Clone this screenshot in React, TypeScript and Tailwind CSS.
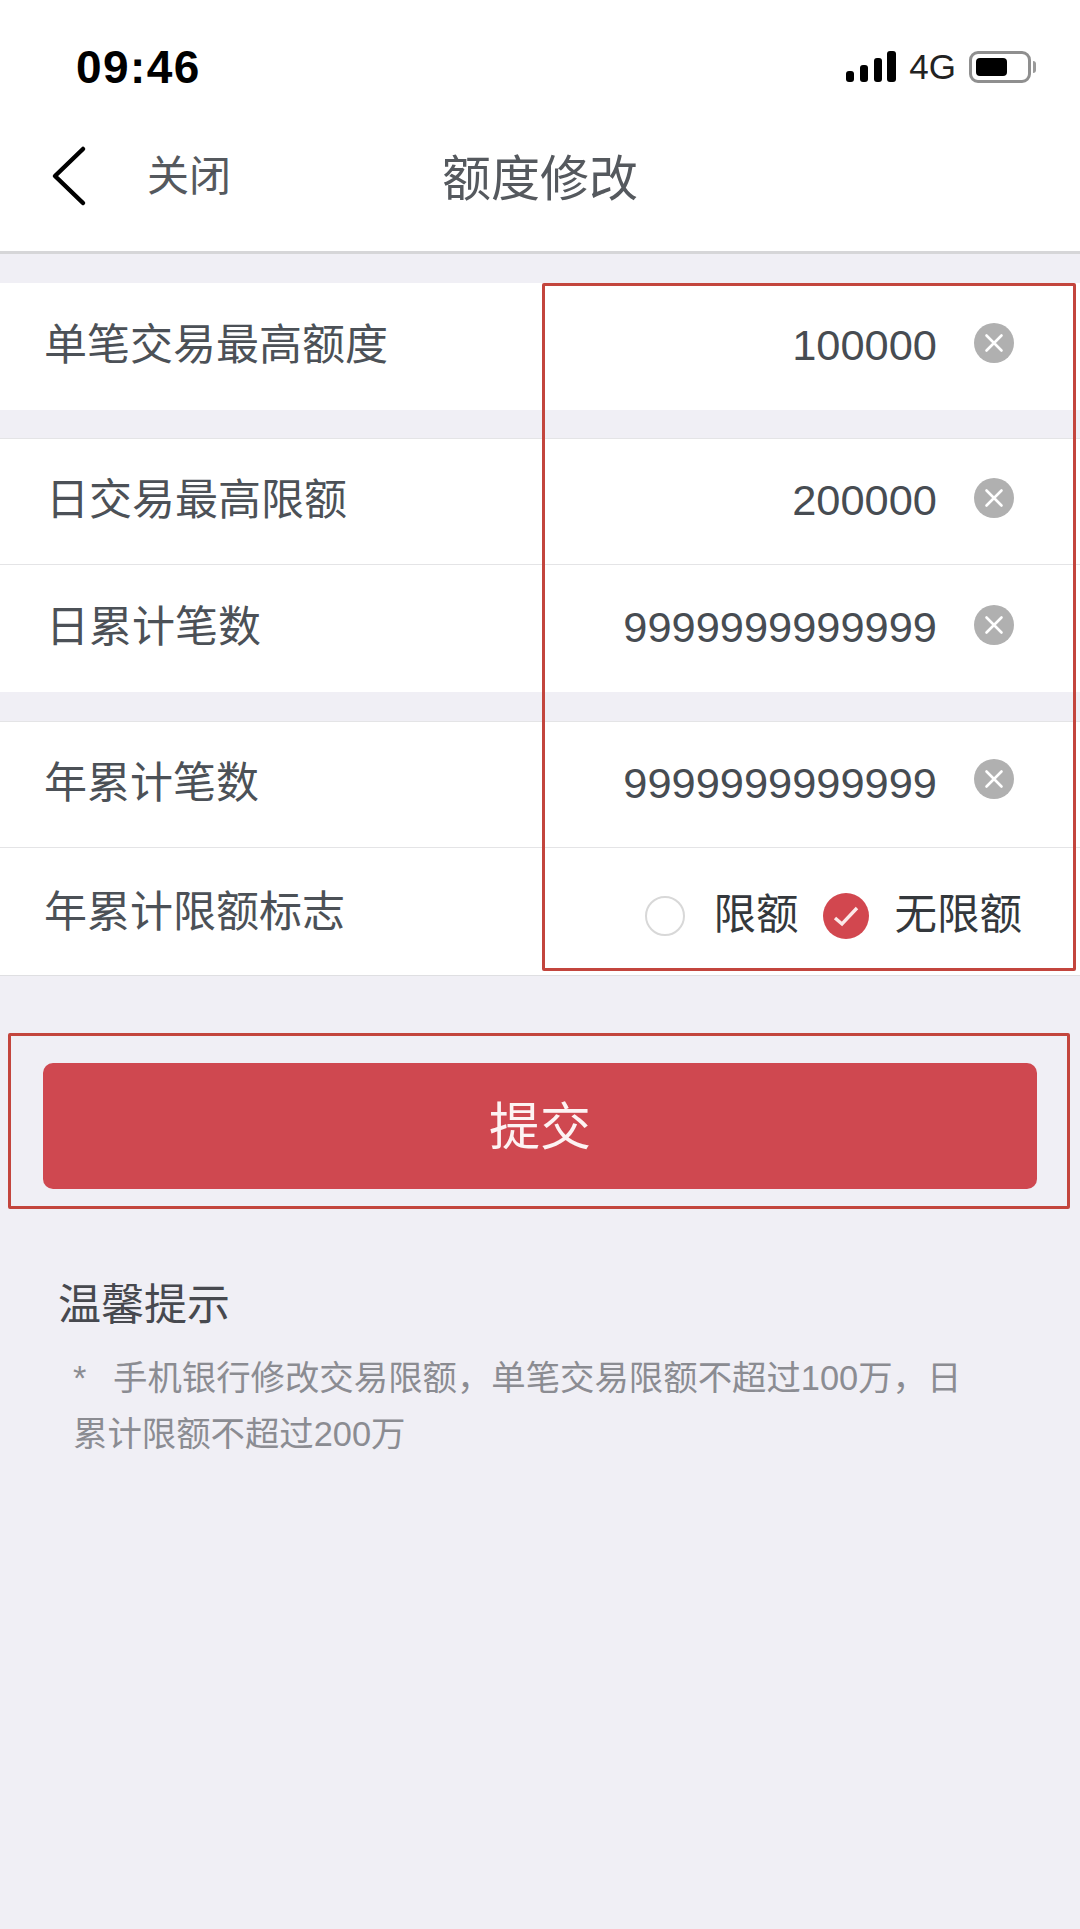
const font = "font-['Liberation_Sans','Noto_Sans_CJK_SC',sans-serif]";

function ClearIcon({ className }: { className: string }) {
  return (
    <svg width="40" height="40" viewBox="0 0 40 40" className={`shrink-0 ${className}`}>
      <circle cx="20" cy="20" r="20" fill="#b0b0b0" />
      <path d="M12.5 12.5 L27.5 27.5 M27.5 12.5 L12.5 27.5" stroke="#fff" strokeWidth="2.6" strokeLinecap="round" />
    </svg>
  );
}

function InputRow({ label, value, last, indent, tall, iconClass = "-mt-[7px]" }: { label: string; value: string; last?: boolean; indent?: boolean; tall?: boolean; iconClass?: string }) {
  return (
    <div className={`${tall ? "h-[127px]" : "h-[126px]"} flex items-center justify-between bg-white ${indent ? "pl-[46px]" : "pl-[44px]"} pr-[66px] ${last ? "" : "border-b border-[#e4e4e6]"}`}>
      <div className="text-[43px] text-[#4c5157] leading-none -mt-[2px]">{label}</div>
      <div className="flex items-center gap-[37px]">
        <div className="text-[43.4px] text-[#474c52] leading-none -mt-[2px]">{value}</div>
        <ClearIcon className={iconClass} />
      </div>
    </div>
  );
}

function StatusBar() {
  return (
    <div className="h-[101px] flex items-start justify-between pl-[76px] pr-[44px] pt-[44px]">
      <div className="text-[46px] font-bold leading-none text-black tracking-[1.4px]">09:46</div>
      <div className="flex items-center pt-[5px]">
        <svg width="50" height="31" viewBox="0 0 50 31" fill="#000">
          <rect x="0" y="20" width="8" height="11" rx="3" />
          <rect x="14" y="14" width="8" height="17" rx="3" />
          <rect x="28" y="7" width="8" height="24" rx="3" />
          <rect x="41" y="0" width="9" height="31" rx="3" />
        </svg>
        <div className="text-[35px] leading-none text-[#222] ml-[13px] mr-[13px]">4G</div>
        <div className="w-[62px] h-[32px] rounded-[9px] border-[3px] border-[#8f8f8f] p-[4px]">
          <div className="w-[31px] h-full rounded-[4px] bg-black" />
        </div>
        <div className="w-[3px] h-[12px] ml-[2px] rounded-r-full bg-[#9a9a9a]" />
      </div>
    </div>
  );
}

export default function App() {
  return (
    <div className={`relative w-[1080px] h-[1929px] overflow-hidden bg-[#f0eff5] ${font}`}>
      <div className="bg-white border-b-[3px] border-[#d6d6d8]">
        <StatusBar />
        <div className="relative h-[150px] flex items-center pl-[51px]">
          <svg width="36" height="66" viewBox="0 0 36 66" fill="none" className="shrink-0">
            <path d="M32 6 L4 33 L32 60" stroke="#000" strokeWidth="4.5" strokeLinecap="round" strokeLinejoin="round" />
          </svg>
          <div className="text-[42px] text-[#55595e] leading-none ml-[60px] pt-[2px]">关闭</div>
          <div className="absolute left-0 right-0 top-[54px] text-center text-[49px] text-[#55595e] leading-none">额度修改</div>
        </div>
      </div>

      <div className="pt-[29px]">
        <InputRow label="单笔交易最高额度" value="100000" last tall />
        <div className="h-[28px]" />
        <div className="border-t border-[#e4e4e6]">
          <InputRow label="日交易最高限额" value="200000" indent />
          <InputRow label="日累计笔数" value="9999999999999" last indent tall />
        </div>
        <div className="h-[29px]" />
        <div className="border-t border-[#e4e4e6]">
          <InputRow label="年累计笔数" value="9999999999999" iconClass="-mt-[12px]" />
          <div className="h-[128px] flex items-center justify-between bg-white pl-[44px] pr-[58px] border-b border-[#dfdfe2]">
            <div className="text-[43px] text-[#4c5157] leading-none mt-[1px]">年累计限额标志</div>
            <div className="flex items-center text-[42.5px] text-[#34383c] leading-none pt-[8px]">
              <div className="w-[40px] h-[40px] rounded-full border-2 border-[#d8d8d8] bg-white" />
              <div className="ml-[28px]">限额</div>
              <svg width="46" height="46" viewBox="0 0 46 46" className="ml-[25px]">
                <circle cx="23" cy="23" r="23" fill="#d2474f" />
                <path d="M12 25 L19 31 L34 15" fill="none" stroke="#fbe9e9" strokeWidth="3.4" />
              </svg>
              <div className="ml-[25px]">无限额</div>
            </div>
          </div>
        </div>
      </div>

      <div className="px-[43px] pt-[87px]">
        <button className="w-[994px] h-[126px] rounded-[10px] bg-[#cf4850] text-[51px] leading-none text-[#fdf3f3] pt-[2px]">提交</button>
      </div>

      <div className="pl-[58px] pt-[95px] text-[43px] leading-none text-[#47494f]">温馨提示</div>
      <div className="ml-[73px] mt-[23px] text-[34.4px] leading-[56px] text-[#8b8c92]">
        <div className="flex">
          <span className="w-[40px]">*</span>
          <span>手机银行修改交易限额，单笔交易限额不超过100万，日</span>
        </div>
        <div>累计限额不超过200万</div>
      </div>

      {/* red annotation boxes drawn over the page */}
      <div className="absolute left-[542px] top-[283px] w-[534px] h-[688px] rounded-[2px] border-[3px] border-[#c3453d]" />
      <div className="absolute left-[8px] top-[1033px] w-[1062px] h-[176px] rounded-[2px] border-[3px] border-[#c3453d]" />
    </div>
  );
}
